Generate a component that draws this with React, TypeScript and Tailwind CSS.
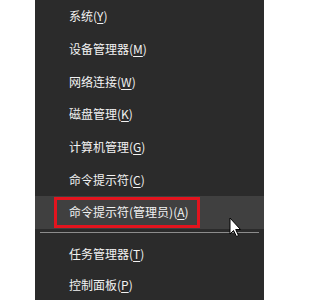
import * as React from "react";

// Win+X context menu items (label + underlined access key)
const topItems = [
  { label: "系统", key: "Y" },
  { label: "设备管理器", key: "M" },
  { label: "网络连接", key: "W" },
  { label: "磁盘管理", key: "K" },
  { label: "计算机管理", key: "G" },
  { label: "命令提示符", key: "C" },
];

const bottomItems = [
  { label: "任务管理器", key: "T" },
  { label: "控制面板", key: "P" },
];

const MenuLabel = ({ label, accessKey }: { label: string; accessKey: string }) => (
  <span>
    {label}(<span className="underline underline-offset-2">{accessKey}</span>)
  </span>
);

const Cursor = () => (
  <svg
    className="absolute left-[229px] top-[217px]"
    width="13"
    height="21"
    viewBox="0 0 13 21"
  >
    <path
      d="M1 1 L1 17 L4.5 13.5 L7.5 19.5 L9.5 18.5 L6.7 12.5 L11.5 12.5 Z"
      fill="#ffffff"
      stroke="#000000"
      strokeWidth="1"
      strokeLinejoin="round"
    />
  </svg>
);

export default function App() {
  return (
    <div
      className="relative w-[300px] h-[300px] overflow-hidden bg-white text-[12px] text-[#f2f2f2]"
      style={{ fontFamily: '"Noto Sans CJK SC", "Liberation Sans", sans-serif' }}
    >
      <div className="ml-[35px] w-[229px] h-full bg-[#2b2b2b] flex flex-col">
        {topItems.map((item) => (
          <div key={item.key} className="h-[33px] flex items-center pl-[34px]">
            <MenuLabel label={item.label} accessKey={item.key} />
          </div>
        ))}

        {/* hovered row with red annotation box */}
        <div className="relative h-[33px] flex items-center pl-[34px] bg-[#404040]">
          <MenuLabel label="命令提示符(管理员)" accessKey="A" />
          <div className="absolute left-[19px] top-[1px] w-[146px] h-[31px] border-[3px] border-[#e3141e]" />
        </div>

        <div className="pt-[3px] pb-[6px] px-[5px]">
          <div className="h-px bg-[#8c8c8c]" />
        </div>

        {bottomItems.map((item) => (
          <div key={item.key} className="h-[31px] flex items-center pl-[34px]">
            <MenuLabel label={item.label} accessKey={item.key} />
          </div>
        ))}
      </div>
      <Cursor />
    </div>
  );
}
